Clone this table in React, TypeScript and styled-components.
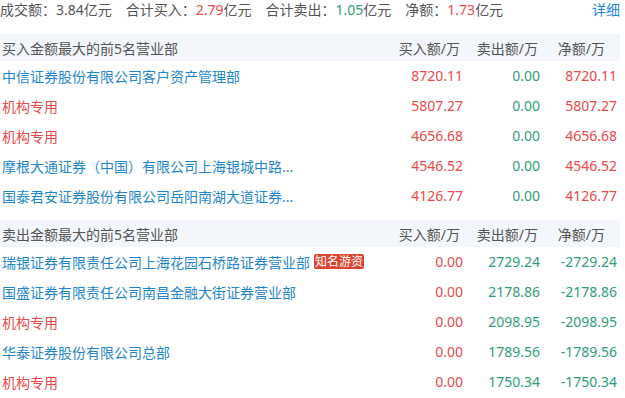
import React from "react";
import styled, { createGlobalStyle } from "styled-components";

type Tone = "up" | "down" | "plain";

interface Row {
  name: string;
  badge?: string;
  buy: string;
  sell: string;
  net: string;
}

const buyRows: Row[] = [
  { name: "中信证券股份有限公司客户资产管理部", buy: "8720.11", sell: "0.00", net: "8720.11" },
  { name: "机构专用", buy: "5807.27", sell: "0.00", net: "5807.27" },
  { name: "机构专用", buy: "4656.68", sell: "0.00", net: "4656.68" },
  { name: "摩根大通证券（中国）有限公司上海银城中路...", buy: "4546.52", sell: "0.00", net: "4546.52" },
  { name: "国泰君安证券股份有限公司岳阳南湖大道证券...", buy: "4126.77", sell: "0.00", net: "4126.77" },
];

const sellRows: Row[] = [
  { name: "瑞银证券有限责任公司上海花园石桥路证券营业部", badge: "知名游资", buy: "0.00", sell: "2729.24", net: "-2729.24" },
  { name: "国盛证券有限责任公司南昌金融大街证券营业部", buy: "0.00", sell: "2178.86", net: "-2178.86" },
  { name: "机构专用", buy: "0.00", sell: "2098.95", net: "-2098.95" },
  { name: "华泰证券股份有限公司总部", buy: "0.00", sell: "1789.56", net: "-1789.56" },
  { name: "机构专用", buy: "0.00", sell: "1750.34", net: "-1750.34" },
];

const GlobalStyle = createGlobalStyle`
  body {
    margin: 0;
    background: #fff;
    font-family: "Noto Sans", "Noto Sans CJK SC", sans-serif;
    font-size: 14px;
    color: #555;
  }
`;

const colors: Record<Tone, string> = {
  up: "#e94a4a",
  down: "#2f9e76",
  plain: "#555",
};

const Wrap = styled.div`
  width: 620px;
`;

const Summary = styled.div`
  display: flex;
  align-items: center;
  height: 20px;
  line-height: 20px;
  margin-bottom: 14px;
`;

const Stat = styled.span`
  margin-right: 14px;
  white-space: nowrap;
`;

const Num = styled.span<{ $tone: Tone }>`
  color: ${(p) => colors[p.$tone]};
`;

const Detail = styled.a`
  margin-left: auto;
  color: #1a8ad4;
  text-decoration: none;
  cursor: pointer;
`;

const Section = styled.div`
  & + & {
    margin-top: 9px;
  }
`;

const Grid = styled.div`
  display: grid;
  grid-template-columns: 1fr 77px 77px 77px;
  align-items: center;
`;

const HeadRow = styled(Grid)`
  height: 27px;
  background: #f3f6fa;
  color: #555;
`;

const HeadCell = styled.div<{ $pad?: number }>`
  text-align: right;
  padding-right: ${(p) => p.$pad ?? 0}px;
  white-space: nowrap;
`;

const Title = styled.div`
  padding-left: 2px;
`;

const BodyRow = styled(Grid)`
  height: 30px;
  padding-right: 3px;
  padding-bottom: 1px;
  box-sizing: border-box;
`;

const Name = styled.div<{ $inst: boolean }>`
  padding-left: 2px;
  color: ${(p) => (p.$inst ? "#e94a4a" : "#1f87c9")};
  white-space: nowrap;
  display: flex;
  align-items: center;
`;

const Badge = styled.span`
  margin-left: 4px;
  padding: 0 1px;
  height: 15px;
  line-height: 15px;
  font-size: 12px;
  color: #fff;
  background: #d9452f;
  border-radius: 2px;
`;

const Cell = styled.div<{ $tone: Tone }>`
  text-align: right;
  color: ${(p) => colors[p.$tone]};
`;

const netTone = (v: string): Tone => (v.startsWith("-") ? "down" : "up");

const Table = ({ title, rows }: { title: string; rows: Row[] }) => (
  <Section>
    <HeadRow>
      <Title>{title}</Title>
      <HeadCell $pad={6}>买入额/万</HeadCell>
      <HeadCell $pad={5}>卖出额/万</HeadCell>
      <HeadCell $pad={15}>净额/万</HeadCell>
    </HeadRow>
    {rows.map((r, i) => (
      <BodyRow key={i}>
        <Name $inst={r.name === "机构专用"}>
          {r.name}
          {r.badge && <Badge>{r.badge}</Badge>}
        </Name>
        <Cell $tone="up">{r.buy}</Cell>
        <Cell $tone="down">{r.sell}</Cell>
        <Cell $tone={netTone(r.net)}>{r.net}</Cell>
      </BodyRow>
    ))}
  </Section>
);

export default function App() {
  return (
    <Wrap>
      <GlobalStyle />
      <Summary>
        <Stat>
          成交额：<Num $tone="plain">3.84</Num>亿元
        </Stat>
        <Stat>
          合计买入：<Num $tone="up">2.79</Num>亿元
        </Stat>
        <Stat>
          合计卖出：<Num $tone="down">1.05</Num>亿元
        </Stat>
        <Stat>
          净额：<Num $tone="up">1.73</Num>亿元
        </Stat>
        <Detail>详细</Detail>
      </Summary>
      <Table title="买入金额最大的前5名营业部" rows={buyRows} />
      <Table title="卖出金额最大的前5名营业部" rows={sellRows} />
    </Wrap>
  );
}
